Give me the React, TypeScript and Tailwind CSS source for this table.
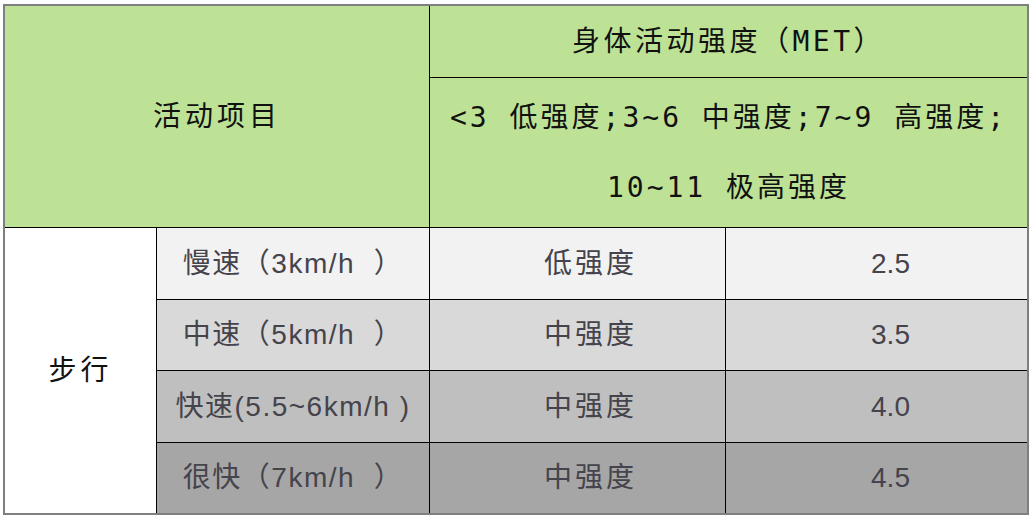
import React from 'react';

const rows = [
  { speed: '慢速（3km/h  ）', level: '低强度', met: '2.5', bg: 'bg-[#f2f2f2]', h: 'h-[72px]' },
  { speed: '中速（5km/h  ）', level: '中强度', met: '3.5', bg: 'bg-[#d9d9d9]', h: 'h-[71px]' },
  { speed: '快速(5.5~6km/h )', level: '中强度', met: '4.0', bg: 'bg-[#bfbfbf]', h: 'h-[72px]' },
  { speed: '很快（7km/h  ）', level: '中强度', met: '4.5', bg: 'bg-[#a6a6a6]', h: 'h-[70px]' },
];

const head = { fontFamily: '"DejaVu Sans Mono", "Noto Sans CJK SC", monospace' };
const body = { fontFamily: '"Liberation Sans", "Noto Sans CJK SC", sans-serif' };

export default function App() {
  return (
    <div className="w-[1032px] h-[516px] bg-white pt-[4px] pl-[3px]">
      <div className="w-[1026px] border-2 border-[#7f7f7f]">
        {/* Header */}
        <div className="flex bg-[#bde295] border-b border-black text-[#111]" style={head}>
          <div className="w-[425px] h-[221px] border-r border-black flex items-center justify-center text-[28px] tracking-[4px]">
            活动项目
          </div>
          <div className="flex-1 flex flex-col">
            <div className="h-[72px] border-b border-black flex items-center justify-center text-[28px] tracking-[3.5px] whitespace-nowrap">
              身体活动强度（MET）
            </div>
            <div className="h-[149px] flex flex-col items-center justify-center text-[28px] tracking-[3px] leading-[70px] whitespace-nowrap">
              <div>&lt;3 低强度;3~6 中强度;7~9 高强度;</div>
              <div>10~11 极高强度</div>
            </div>
          </div>
        </div>

        {/* Body */}
        <div className="flex" style={body}>
          <div className="w-[152px] border-r border-black bg-white flex items-center justify-center text-[28px] tracking-[4px] text-[#111]">
            步行
          </div>
          <div className="flex-1 flex flex-col">
            {rows.map((r, i) => (
              <div
                key={i}
                className={`flex ${r.h} ${r.bg} ${i < rows.length - 1 ? 'border-b border-black' : ''} text-[28px] text-[#45434b]`}
              >
                <div className="w-[273px] border-r border-black flex items-center justify-center tracking-[1.5px] whitespace-pre">
                  {r.speed}
                </div>
                <div className="w-[296px] border-r border-black flex items-center justify-center pl-[26px] tracking-[3px]">
                  {r.level}
                </div>
                <div className="flex-1 flex items-center justify-center pl-[28px]">{r.met}</div>
              </div>
            ))}
          </div>
        </div>
      </div>
    </div>
  );
}
